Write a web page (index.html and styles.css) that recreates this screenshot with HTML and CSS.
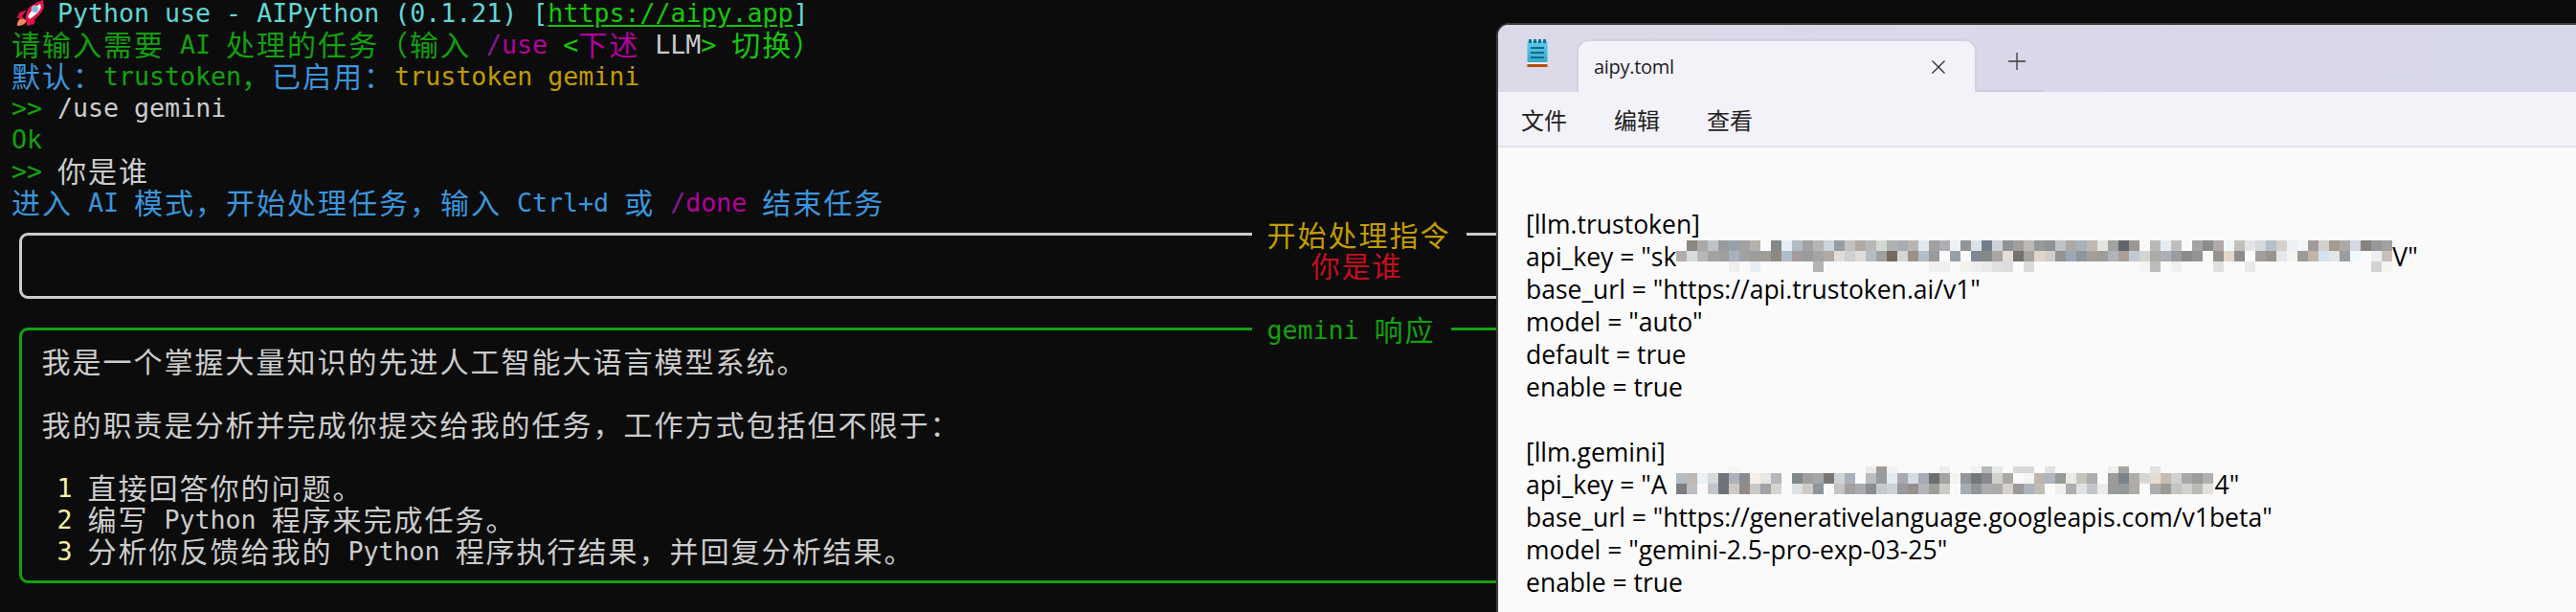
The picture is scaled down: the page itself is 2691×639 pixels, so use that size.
FILE: index.html
```html
<!DOCTYPE html>
<html lang="zh">
<head>
<meta charset="utf-8">
<title>aipy</title>
<link rel="stylesheet" href="styles.css">
</head>
<body>
<div class="desktop">
  <main class="terminal">
    <div class="line cy"><svg class="rocket" viewBox="0 0 30 28"><path fill="#f58a5e" d="M7 19Q1 19 1 27Q8 27 11 22Z"/><path fill="#e0144c" d="M12 10L3 13L1 19L9 20ZM20 16L19 25L11 27L11 21ZM28 0L29 8Q26 16 13 25L6 17Q15 3 28 0Z"/><path fill="#f6f6f8" d="M25 4L26 8Q23 14 14 20L12 17Q17 8 25 4Z"/><circle cx="19.500" cy="9.500" r="3.500" fill="#7fb6e6" stroke="#bcd" stroke-width="1"/></svg><span class="after-rocket">Python use - AIPython (0.1.21) [<a class="link">https://aipy.app</a>]</span></div>
    <div class="line"><span class="c g">请输入需要</span><span class="g"> AI </span><span class="c g">处理的任务（输入</span> <span class="p">/</span><span class="m">use</span> <span class="bg">&lt;</span><span class="c m">下述</span> <span class="w">LLM</span><span class="bg">&gt;</span> <span class="c bg">切换）</span></div>
    <div class="line"><span class="c b">默认：</span><span class="g">trustoken</span><span class="c g">，</span><span class="c b">已启用：</span><span class="y">trustoken gemini</span></div>
    <div class="line"><span class="g">&gt;&gt;</span> <span class="t">/use gemini</span></div>
    <div class="line g">Ok</div>
    <div class="line"><span class="g">&gt;&gt;</span> <span class="c t">你是谁</span></div>
    <div class="line b"><span class="c">进入</span> AI <span class="c">模式，开始处理任务，输入</span> Ctrl+d <span class="c">或</span> <span class="p">/</span><span class="m">done</span> <span class="c">结束任务</span></div>

    <section class="panel panel-task">
      <h2 class="panel-title"><span class="c y">开始处理指令</span></h2>
      <div class="line center"><span class="c r">你是谁</span></div>
    </section>

    <section class="panel panel-reply">
      <h2 class="panel-title"><span class="g">gemini </span><span class="c g">响应</span></h2>
      <div class="line"><span class="c t">我是一个掌握大量知识的先进人工智能大语言模型系统。</span></div>
      <div class="line"></div>
      <div class="line"><span class="c t">我的职责是分析并完成你提交给我的任务，工作方式包括但不限于：</span></div>
      <div class="line"></div>
      <div class="line item"><span class="n">1</span> <span class="c t">直接回答你的问题。</span></div>
      <div class="line item"><span class="n">2</span> <span class="c t">编写</span><span class="t"> Python </span><span class="c t">程序来完成任务。</span></div>
      <div class="line item"><span class="n">3</span> <span class="c t">分析你反馈给我的</span><span class="t"> Python </span><span class="c t">程序执行结果，并回复分析结果。</span></div>
    </section>
  </main>

  <aside class="notepad">
    <header class="tabbar">
      <div class="appicon">
        <svg width="22" height="30" viewBox="0 0 22 30"><defs><linearGradient id="pad" x1="0" y1="0" x2="0" y2="1"><stop offset="0" stop-color="#62cbe8"/><stop offset="1" stop-color="#35a9cf"/></linearGradient></defs><rect x="0.5" y="2" width="21" height="22" rx="1" fill="url(#pad)"/><path fill="#0f6f92" d="M2 0h3v4H2zM7 0h3v4H7zM12 0h3v4h-3zM17 0h3v4h-3z"/><path fill="#11688a" d="M4 8h14v2H4zM4 13h14v2H4zM4 18h14v2H4z"/><rect x="0.5" y="24" width="21" height="2" fill="#f1ede6"/><rect x="0.5" y="26" width="21" height="3" fill="#b2500f"/></svg>
      </div>
      <div class="tab">
        <span class="tabname">aipy.toml</span>
        <svg class="tabclose" width="16" height="16" viewBox="0 0 16 16"><path d="M1.500 1.500L14.500 14.500M14.500 1.500L1.500 14.500" stroke="#2a2a2a" stroke-width="1.300" fill="none"/></svg>
      </div>
      <div class="newtab"><svg width="18" height="18" viewBox="0 0 18 18"><path d="M9 0V18M0 9H18" stroke="#3a3a3a" stroke-width="1.300" fill="none"/></svg></div>
    </header>
    <nav class="menubar"><span>文件</span><span>编辑</span><span>查看</span></nav>
    <div class="editor">
      <div class="eline">[llm.trustoken]</div>
      <div class="eline">api_key = "sk<svg class="mosaic mosaic-a" id="m1"></svg>V"</div>
      <div class="eline">base_url = "https://api.trustoken.ai/v1"</div>
      <div class="eline">model = "auto"</div>
      <div class="eline">default = true</div>
      <div class="eline">enable = true</div>
      <div class="eline"></div>
      <div class="eline">[llm.gemini]</div>
      <div class="eline">api_key = "A<svg class="mosaic mosaic-b" id="m2"></svg>4"</div>
      <div class="eline">base_url = "https://generativelanguage.googleapis.com/v1beta"</div>
      <div class="eline">model = "gemini-2.5-pro-exp-03-25"</div>
      <div class="eline">enable = true</div>
    </div>
  </aside>
</div>
<script src="script.js"></script>
</body>
</html>
```
FILE: styles.css
```css
* { box-sizing: border-box; }
html, body { margin: 0; height: 100%; }
body { background: #0c0c0c; overflow: hidden; }
.desktop { display: flex; width: 2691px; height: 639px; overflow: hidden; }

.terminal {
  flex: 0 0 1563px;
  overflow: hidden;
  padding: 0 0 0 12px;
  font-family: "DejaVu Sans Mono", monospace;
  font-size: 26.6px;
  color: #cccccc;
}
.line { height: 33px; line-height: 33px; white-space: pre; }
.line:first-child { height: 30px; line-height: 27px; }
.c {
  font-family: "Noto Sans CJK SC", sans-serif;
  font-size: 30px;
  letter-spacing: 2px;
  line-height: 0;
  vertical-align: -1.500px;
}
.cy { color: #61d6d6; }
.g { color: #13a10e; }
.bg { color: #16c60c; }
.b { color: #3a96dd; }
.y { color: #c19c00; }
.m { color: #b4009e; }
.p { color: #881798; }
.w { color: #cccccc; }
.t { color: #cccccc; }
.r { color: #c50f1f; }
.n { color: #f9f1a5; }
.link { color: #16c60c; text-decoration: underline; text-underline-offset: 3px; }
.rocket { display: inline-block; width: 30px; height: 28px; margin: 0 13px -4px 5px; vertical-align: top; }

.panel {
  position: relative;
  width: 2796px;
  margin-left: 7.500px;
  border: 3px solid #cccccc;
  border-radius: 9px;
}
.panel-task { margin-top: 15px; height: 69px; padding-top: 15px; }
.panel-reply { margin-top: 30px; height: 267px; padding: 16px 0 0 21px; border-color: #13a10e; }
.panel-title {
  position: absolute;
  left: 1285px;
  top: -17px;
  margin: 0;
  padding: 0 16px;
  height: 33px;
  line-height: 33px;
  font-size: 26.6px;
  font-weight: normal;
  white-space: pre;
  background: #0c0c0c;
}
.center { text-align: center; }
.item { padding-left: 16px; }

.notepad {
  flex: 1;
  margin-top: 24px;
  display: flex;
  flex-direction: column;
  border-top: 2px solid #3d3d40;
  border-left: 2px solid #3d3d40;
  border-top-left-radius: 13px;
  overflow: hidden;
  background: #fafafa;
  color: #111;
  font-family: "Open Sans", sans-serif;
}
.tabbar {
  flex: 0 0 70px;
  display: flex;
  align-items: flex-end;
  background: linear-gradient(100deg, #dcd9e8, #d7d7ea);
}
.appicon { width: 82px; height: 55px; padding: 0 0 0 30px; flex: none; }
.tab {
  flex: 0 0 418px;
  height: 55px;
  display: flex;
  align-items: center;
  justify-content: space-between;
  padding: 0 30px 0 16px;
  background: #f3f2f8;
  border: 2px solid #d3d1e0;
  border-bottom: 0;
  border-radius: 13px 13px 0 0;
}
.tabname { font-size: 20px; letter-spacing: -0.300px; color: #1c1c1c; }
.newtab {
  flex: 0 0 70px;
  height: 55px;
  padding: 14px 0 0 33px;
  border-bottom: 2px solid #cccadb;
}
.menubar {
  flex: 0 0 58px;
  display: flex;
  gap: 49px;
  align-items: center;
  padding-left: 24px;
  background: #f3f2f8;
  border-bottom: 2px solid #e5e4e8;
  font-family: "Noto Sans CJK SC", sans-serif;
  font-size: 24px;
  color: #222;
}
.editor { flex: 1; padding: 63px 0 0 29px; font-size: 26.500px; color: #000; }
.eline { height: 34px; line-height: 34px; white-space: pre; }
.mosaic { display: inline-block; vertical-align: -6px; }
.mosaic-a { width: 748px; height: 33px; }
.mosaic-b { width: 561px; height: 29px; margin: -3px 2px 0 9px; vertical-align: 0; }
```
FILE: script.js
```js
// Pixelated (redacted) API keys: colours per row of blocks, "-" is a clear block.
var keys = {
  m1: { heights: [11, 11, 11], rows: [
    "- 8a8682 a9a9a9 bcc2c6 979b9e 98a1ab a2a2a2 b5b2ad - 848887 e4edf5 b2bac2 a0a2a3 b8b4b1 ccd4de 969da3 c2c2c2 b2a9a3 b7b7b7 d3dad4 adb3b1 a6acb2 b9b5b2 e4e9ed a0a0a0 afafb3 eef1f4 929496 d9e1ea 737e8a ccd1d6 8f9396 a29e9e bbbab5 959997 8e9493 bdc3c6 aca8a4 a8b2bc bfb7b0 e6e5e3 a0a39e 62646e 9b9793 - bbb9b7 e4edf4 c1bfbd - a2a4a5 8a8c8e b1a9ab f0f8f9 c4bfbb e5e5e5 d5d9da b5c0cc d4d1cc edf1f5 f3f6f9 a09b98 d1d1cf a69b8f aeaba7 d5d7e1 86827e 979797 a0a09e",
    "b3aeac d9dbdc b5b8b4 a2a2a2 9f9f9d a8b2bd a0a2a3 9f9d9b 9f9d9a 8f8980 afbdc8 a59a9e 999b9c a5a5a3 b1a9a4 e3ddd8 d0d0d0 dfdcd9 b5bdc2 a0a0a0 766a5e d5d5d5 9b9188 b0bdca 9a9a9a - 97a0aa - 7f8994 85898a aaa4a2 e4ddd5 727270 a7a29e e1d5ca d0cfcb 939393 9aa7b7 8f959f a59e9a a09c98 b0b3b9 a99f98 bfcad4 d4d4d2 aeaaa6 abb0b6 999ca1 8a8a88 969491 - 96928d e4d6ca 8d8d8d - a29e9b 98948e e4e8eb f3f4ee 9b9b9b c2b5a8 d3e2ef e4e5e5 9a9ca1 edfafb - ebeff4 c8c1ba",
    "- - - - - eeeeee - e9edf4 - - - - - b4b4b2 - - - - - - - - - - f1efed f1efed - f4f0ec eceef0 e9ebea e1dfdd dedcdc - d9dbdb - - - - - - - - - - f4f4f2 bdbdbd - efefed - - - e0e0e0 - - e9e9e9 - - - - - - - - - - - d3d3d3 f4f4f2"
  ] },
  m2: { heights: [7, 11, 11], rows: [
    "- - - - - f6f3f0 - - - - - - - - - - - - eceae8 a09c9a f1f1f1 - - - - eceded - - f5f1ef b6babd e7e8e9 - d8d8d8 d8d8d8 - e0e2e8 - - - - - eeeeec a8a4a0 - - e2e3e5 - - - - - -",
    "b4bdc4 bcb8b4 e8f1f5 d7d9db 6f737c adb2ba 898e91 f6efe7 e6e7e4 b2b8bb - 7f8789 9e9e9e a5a6a8 7a7672 d0d3d5 a9b0bd - b8bcbf 989a9b e3ebf3 a7a9ae d4dce3 a5acb7 6b6f72 a3a3a1 f3f3f1 93979a 73787b 8a888d d2d0ca abaaa2 fbfbfb f3f4ef bfb5ac afb5c1 979b98 eaeae4 c6c3bc adadad - 9d9c98 7b8389 b1ada9 d6d8d8 e5dcd2 c7bbaf d0d0d0 a8a8a8 9c9c9c b0b0ae",
    "7b7d80 bcbdbf - c2c5cb 6f7279 cdc8c3 918a85 c8c8c4 9fa3a6 d5d2cf - dce0e3 cdc9c4 8c969c - c4c4c4 a39f9c a8abaf 8c8c8c c2cace cdd3d5 98989e 96918c b2b6b9 9f9f99 cecac6 - a5abb1 90959a adadad aeaaa9 d8d1cb 9a9898 adb3bc c1bcb5 - efefed acaeac dfe1e3 c1c4c8 ebebeb 9a9a9a 949999 aeaaa5 - adaeac 9c9a97 c4c4c2 d2d0cc bcbab6 e0e0de"
  ] }
};
var NS = "http://www.w3.org/2000/svg";
Object.keys(keys).forEach(function (id) {
  var svg = document.getElementById(id), key = keys[id], y = 0;
  svg.setAttribute("shape-rendering", "crispEdges");
  key.rows.forEach(function (row, r) {
    row.split(" ").forEach(function (colour, x) {
      if (colour === "-") return;
      var rect = document.createElementNS(NS, "rect");
      rect.setAttribute("x", x * 11);
      rect.setAttribute("y", y);
      rect.setAttribute("width", 11);
      rect.setAttribute("height", key.heights[r]);
      rect.setAttribute("fill", "#" + colour);
      svg.appendChild(rect);
    });
    y += key.heights[r];
  });
});
```
